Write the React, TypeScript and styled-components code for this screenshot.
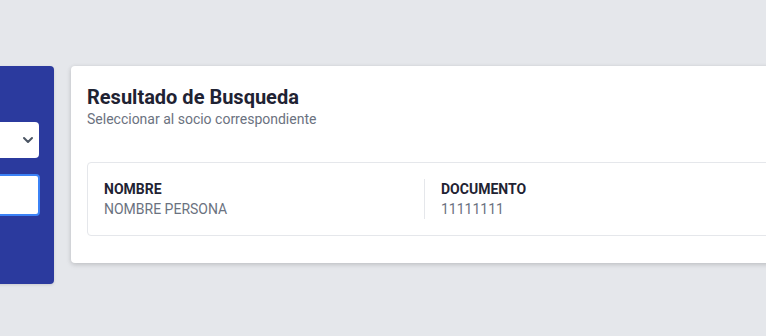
import React from 'react';
import styled, { createGlobalStyle } from 'styled-components';

const GlobalStyle = createGlobalStyle`
  html, body {
    margin: 0;
    padding: 0;
    background: #e5e7eb;
    overflow: hidden;
  }
  body {
    font-family: Roboto, "Liberation Sans", Arial, sans-serif;
  }
`;

const Page = styled.div`
  display: flex;
  align-items: flex-start;
  gap: 17px;
  width: 1400px;
  height: 336px;
  padding-top: 66px;
  margin-left: -250px;
  box-sizing: border-box;
`;

const SearchPanel = styled.aside`
  width: 304px;
  height: 218px;
  box-sizing: border-box;
  padding: 56px 15px 0 20px;
  background: #2b3a9e;
  border-radius: 4px;
  box-shadow: 0 1px 3px rgba(0, 0, 0, 0.12);
  display: flex;
  flex-direction: column;
  gap: 16px;
`;

const SelectBox = styled.div`
  height: 36px;
  background: #fff;
  border-radius: 4px;
  display: flex;
  align-items: center;
  justify-content: flex-end;
  padding-right: 1px;
  color: #4b5563;
`;

const TextInput = styled.div`
  height: 42px;
  box-sizing: border-box;
  margin-right: -1px;
  background: #fff;
  border: 2px solid #3b82f6;
  border-radius: 4px;
`;

const Card = styled.section`
  width: 1000px;
  box-sizing: border-box;
  background: #fff;
  border-radius: 4px;
  box-shadow: 0 1px 4px rgba(0, 0, 0, 0.12), 0 2px 6px rgba(0, 0, 0, 0.08);
  padding: 18px 16px 27px;
`;

const Title = styled.h2`
  margin: 0;
  font-size: 20px;
  line-height: 26px;
  font-weight: 700;
  color: #1f2333;
`;

const Subtitle = styled.p`
  margin: 0;
  font-size: 14px;
  line-height: 18px;
  color: #6b7280;
`;

const ResultTable = styled.div`
  margin-top: 34px;
  display: flex;
  border: 1px solid #e5e7eb;
  border-radius: 4px;
  padding: 16px 0;
`;

const Column = styled.div<{ $divider?: boolean }>`
  width: 336px;
  box-sizing: border-box;
  padding: 0 16px;
  border-left: ${p => (p.$divider ? '1px solid #e5e7eb' : 'none')};
`;

const Label = styled.div`
  font-size: 14px;
  line-height: 20px;
  font-weight: 700;
  color: #1f2333;
`;

const Value = styled.div`
  font-size: 14px;
  line-height: 20px;
  color: #6b7280;
`;

const Chevron = () => (
  <svg width="20" height="20" viewBox="0 0 20 20" fill="none">
    <path d="M6 8l4 4 4-4" stroke="currentColor" strokeWidth="2" strokeLinecap="round" strokeLinejoin="round" />
  </svg>
);

export default function App() {
  return (
    <>
      <GlobalStyle />
      <Page>
        <SearchPanel>
          <SelectBox>
            <Chevron />
          </SelectBox>
          <TextInput />
        </SearchPanel>
        <Card>
          <Title>Resultado de Busqueda</Title>
          <Subtitle>Seleccionar al socio correspondiente</Subtitle>
          <ResultTable>
            <Column>
              <Label>NOMBRE</Label>
              <Value>NOMBRE PERSONA</Value>
            </Column>
            <Column $divider>
              <Label>DOCUMENTO</Label>
              <Value>11111111</Value>
            </Column>
          </ResultTable>
        </Card>
      </Page>
    </>
  );
}
